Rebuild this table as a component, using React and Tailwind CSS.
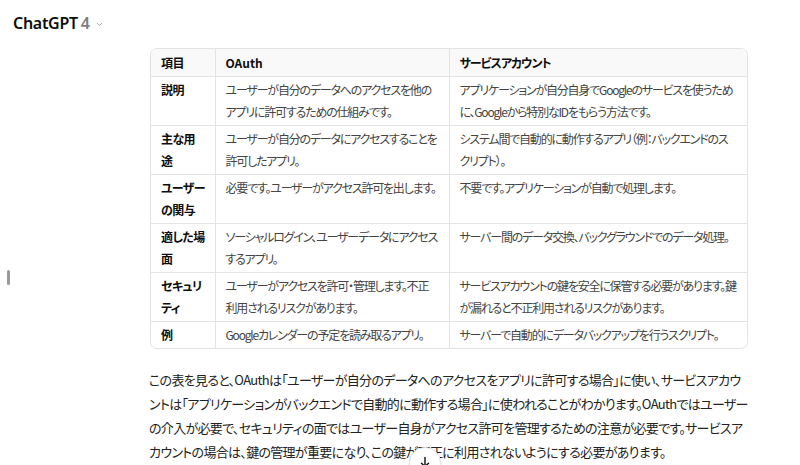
import * as React from 'react';

const rows = [
  {
    item: '説明',
    oauth: 'ユーザーが自分のデータへのアクセスを他のアプリに許可するための仕組みです。',
    sa: 'アプリケーションが自分自身でGoogleのサービスを使うために、Googleから特別なIDをもらう方法です。',
  },
  {
    item: '主な用\n途',
    oauth: 'ユーザーが自分のデータにアクセスすることを許可したアプリ。',
    sa: 'システム間で自動的に動作するアプリ（例：バックエンドのスクリプト）。',
  },
  {
    item: 'ユーザー\nの関与',
    oauth: '必要です。ユーザーがアクセス許可を出します。',
    sa: '不要です。アプリケーションが自動で処理します。',
  },
  {
    item: '適した場\n面',
    oauth: 'ソーシャルログイン、ユーザーデータにアクセスするアプリ。',
    sa: 'サーバー間のデータ交換、バックグラウンドでのデータ処理。',
  },
  {
    item: 'セキュリ\nティ',
    oauth: 'ユーザーがアクセスを許可・管理します。不正利用されるリスクがあります。',
    sa: 'サービスアカウントの鍵を安全に保管する必要があります。鍵が漏れると不正利用されるリスクがあります。',
  },
  {
    item: '例',
    oauth: 'Googleカレンダーの予定を読み取るアプリ。',
    sa: 'サーバーで自動的にデータバックアップを行うスクリプト。',
  },
];

export default function App() {
  return (
    <div className="relative w-[800px] h-[465px] overflow-hidden bg-white font-['Noto_Sans','Noto_Sans_CJK_JP',sans-serif] text-[#0d0d0d]">
      {/* Top bar */}
      <div className="flex items-center gap-[3px] pl-[13px] pt-[6px] h-[40px]">
        <span className="text-[16px] font-semibold leading-none tracking-[-0.3px]">ChatGPT</span>
        <span className="text-[16px] font-semibold leading-none text-[#7d7d7d]">4</span>
        <svg width="9" height="9" viewBox="0 0 24 24" className="ml-[2px] mt-[2px]" fill="none" stroke="#9b9b9b" strokeWidth="2.5" strokeLinecap="round" strokeLinejoin="round">
          <path d="M6 9l6 6 6-6" />
        </svg>
      </div>

      {/* Sidebar handle */}
      <div className="absolute left-[7px] top-[270px] w-[3px] h-[15px] rounded-full bg-[#9a9a9a]" />

      {/* Content */}
      <div className="ml-[149px] w-[600px] pt-[8px]">
        <div className="ml-[1px] w-[598px] border border-[#e3e3e3] rounded-[7px] overflow-hidden">
          <table className="w-full table-fixed border-collapse text-[12px] leading-[22px] tracking-[-1.2px] font-['Noto_Sans_CJK_JP',sans-serif] [font-feature-settings:'palt']">
            <colgroup>
              <col className="w-[64px]" />
              <col className="w-[234px]" />
              <col />
            </colgroup>
            <thead>
              <tr className="bg-[#f9f9f9] border-b border-[#e3e3e3]">
                <th className="text-left font-bold px-[10px] pt-[3px] pb-[2px] tracking-[-0.4px] border-r border-[#e3e3e3]">項目</th>
                <th className="text-left font-bold px-[10px] pt-[3px] pb-[2px] tracking-normal border-r border-[#e3e3e3]">OAuth</th>
                <th className="text-left font-bold px-[10px] pt-[3px] pb-[2px] tracking-[-1px]">サービスアカウント</th>
              </tr>
            </thead>
            <tbody>
              {rows.map((r, i) => (
                <tr key={r.item} className={i < rows.length - 1 ? 'border-b border-[#e3e3e3]' : ''}>
                  <td className="align-top font-bold whitespace-pre pl-[10px] pr-0 py-[2px] tracking-[-0.6px] border-r border-[#e3e3e3]">{r.item}</td>
                  <td className="align-top text-[#444] px-[10px] py-[2px] border-r border-[#e3e3e3]">{r.oauth}</td>
                  <td className="align-top text-[#444] px-[10px] py-[2px]">{r.sa}</td>
                </tr>
              ))}
            </tbody>
          </table>
        </div>

        <p className="mt-[19px] text-[13px] leading-[24px] tracking-[-0.69px] text-[#222] font-['Noto_Sans_CJK_JP',sans-serif] [font-feature-settings:'palt']">
          この表を見ると、OAuthは「ユーザーが自分のデータへのアクセスをアプリに許可する場合」に使い、サービスアカウントは「アプリケーションがバックエンドで自動的に動作する場合」に使われることがわかります。OAuthではユーザーの介入が必要で、セキュリティの面ではユーザー自身がアクセス許可を管理するための注意が必要です。サービスアカウントの場合は、鍵の管理が重要になり、この鍵が不正に利用されないようにする必要があります。
        </p>
      </div>

      {/* Scroll-down button */}
      <button className="absolute left-[409px] top-[447px] w-[32px] h-[32px] rounded-full bg-white border border-[#e3e3e3] shadow-sm flex items-start justify-center pt-[7px]">
        <svg width="14" height="14" viewBox="0 0 24 24" fill="none" stroke="#0d0d0d" strokeWidth="2.4" strokeLinecap="round" strokeLinejoin="round">
          <path d="M12 4v16M6 14l6 6 6-6" />
        </svg>
      </button>
    </div>
  );
}
